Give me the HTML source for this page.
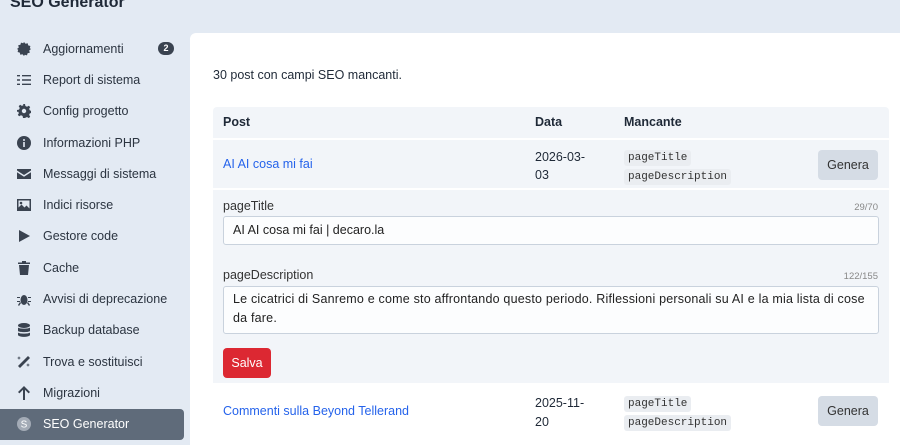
<!DOCTYPE html>
<html><head><meta charset="utf-8"><style>
*{box-sizing:border-box;margin:0;padding:0}
body{width:900px;height:445px;overflow:hidden;background:#e3eaf3;font-family:"Liberation Sans",sans-serif;font-size:13px;color:#1f2937;position:relative}
.title{position:absolute;left:10px;top:-6px;font-weight:bold;font-size:16px;color:#1f2937}
.nav{position:absolute;left:0;top:33px;width:184px}
.it{height:31.3px;display:flex;align-items:center;padding-left:17px;font-size:12.5px;color:#2b3440;position:relative}
.it svg{width:14px;height:14px;margin-right:12px;fill:#3a4350}
.it.act{background:#5f6b7a;color:#fff;border-radius:0 4px 4px 0}
.badge{position:absolute;left:158px;top:9px;width:16px;height:13px;border-radius:7px;background:#3a4350;color:#fff;font-size:9px;font-weight:bold;text-align:center;line-height:13px}
.main{position:absolute;left:190px;top:33px;width:720px;height:412px;background:#fff;border-radius:6px 0 0 0}
.abs{position:absolute}
a{color:#2563eb;text-decoration:none}
code{font-family:"Liberation Mono",monospace;font-size:11px;background:#eaedf1;padding:0 4px;border-radius:3px;color:#333;display:inline-block;line-height:16px}
.btn{position:absolute;border-radius:4px;font-size:12.5px;display:flex;align-items:center;justify-content:center}
.inp{position:absolute;left:223px;width:656px;background:#fcfdfe;border:1px solid #c9d2dd;border-radius:3px;padding:0 9px;font-size:12.5px;color:#222}
.lab{position:absolute;left:223px;font-size:12.5px;color:#333}
.cnt{position:absolute;right:22px;font-size:9.5px;color:#888}
</style></head><body>
<div class="title">SEO Generator</div>
<div class="nav">
<div class="it"><svg viewBox="0 0 14 14"><path d="M7 0l1.5 1.8 2.2-.6.5 2.2 2.2.6-.6 2.2L14 7l-1.8 1.5.6 2.2-2.2.5-.6 2.2-2.2-.6L7 14l-1.5-1.8-2.2.6-.5-2.2-2.2-.6.6-2.2L0 7l1.8-1.5-.6-2.2 2.2-.5.6-2.2 2.2.6z"/></svg>Aggiornamenti<span class="badge">2</span></div>
<div class="it"><svg viewBox="0 0 14 14"><path d="M5 2h9v1.4H5zM5 6.3h9v1.4H5zM5 10.6h9V12H5zM0 2h3v1.4H0zM0 6.3h3v1.4H0zM0 10.6h3V12H0z"/></svg>Report di sistema</div>
<div class="it"><svg viewBox="0 0 14 14"><path d="M6 0h2l.4 2 1.6.8 1.8-1.1 1.4 1.4-1.1 1.8.8 1.6 2 .4v2l-2 .4-.8 1.6 1.1 1.8-1.4 1.4-1.8-1.1-1.6.8L8 14H6l-.4-2-1.6-.8-1.8 1.1-1.4-1.4 1.1-1.8-.8-1.6L0 8V6l2-.4.8-1.6-1.1-1.8 1.4-1.4 1.8 1.1 1.6-.8zM7 4.8a2.2 2.2 0 100 4.4 2.2 2.2 0 000-4.4z"/></svg>Config progetto</div>
<div class="it"><svg viewBox="0 0 14 14"><circle cx="7" cy="7" r="7"/><rect x="6.2" y="6" width="1.6" height="5" fill="#e3eaf3"/><circle cx="7" cy="4" r="1" fill="#e3eaf3"/></svg>Informazioni PHP</div>
<div class="it"><svg viewBox="0 0 14 14"><path d="M0 2h14v1.5L7 8 0 3.5zM0 5.2l7 4.5 7-4.5V12H0z"/></svg>Messaggi di sistema</div>
<div class="it"><svg viewBox="0 0 14 14"><path d="M0 1h14v12H0zM1.5 2.5v7l3-3 3 3 2-2 3 3v-8z"/><circle cx="4" cy="5" r="1.3"/></svg>Indici risorse</div>
<div class="it"><svg viewBox="0 0 14 14"><path d="M2 1l11 6-11 6z"/></svg>Gestore code</div>
<div class="it"><svg viewBox="0 0 14 14"><path d="M1 1.5h12V3H1zM5 0h4v1.5H5zM2 4h10l-1 10H3z"/></svg>Cache</div>
<div class="it"><svg viewBox="0 0 14 14"><ellipse cx="7" cy="8" rx="3.5" ry="5"/><path d="M0 5h3v1H0zM11 5h3v1h-3zM0 9h3v1H0zM11 9h3v1h-3zM1 13l2-3 1 1-2 3zM13 13l-2-3-1 1 2 3z"/></svg>Avvisi di deprecazione</div>
<div class="it"><svg viewBox="0 0 14 14"><ellipse cx="7" cy="2.5" rx="6" ry="2.5"/><path d="M1 4.5c1 1.5 11 1.5 12 0V8c-1 1.5-11 1.5-12 0zM1 9.5c1 1.5 11 1.5 12 0V12c-1 2.5-11 2.5-12 0z"/></svg>Backup database</div>
<div class="it"><svg viewBox="0 0 14 14"><path d="M11 1l2 2L3 13l-2-2zM2 1l.5 1.5L4 3l-1.5.5L2 5l-.5-1.5L0 3l1.5-.5zM11 8l.5 1.5L13 10l-1.5.5L11 12l-.5-1.5L9 10l1.5-.5z"/></svg>Trova e sostituisci</div>
<div class="it"><svg viewBox="0 0 14 14"><path d="M7 0l6 6-1.4 1.4L8 3.8V14H6V3.8L2.4 7.4 1 6z"/></svg>Migrazioni</div>
<div class="it act"><svg viewBox="0 0 14 14"><circle cx="7" cy="7" r="7" fill="#a3abb6"/><text x="7" y="10.5" font-size="10" text-anchor="middle" fill="#fff" font-family="Liberation Sans">S</text></svg>SEO Generator</div>
</div>
<div class="main"></div>
<div class="abs" style="left:213px;top:68px;font-size:12.5px">30 post con campi SEO mancanti.</div>
<div class="abs" style="left:213px;top:107px;width:676px;height:31px;background:#f2f5f9;border-radius:4px 4px 0 0"></div>
<div class="abs" style="left:223px;top:115px;font-weight:bold;font-size:12.5px">Post</div>
<div class="abs" style="left:535px;top:115px;font-weight:bold;font-size:12.5px">Data</div>
<div class="abs" style="left:624px;top:115px;font-weight:bold;font-size:12.5px">Mancante</div>
<div class="abs" style="left:213px;top:140px;width:676px;height:48px;background:#f2f5f9"></div>
<div class="abs" style="left:223px;top:157px;font-size:12.5px"><a>AI AI cosa mi fai</a></div>
<div class="abs" style="left:535px;top:148px;font-size:12.5px;line-height:18px">2026-03-<br>03</div>
<div class="abs" style="left:624px;top:147px;line-height:18px"><code>pageTitle</code><br><code>pageDescription</code></div>
<div class="btn" style="left:818px;top:150px;width:60px;height:30px;background:#d5dce5;color:#333">Genera</div>
<div class="abs" style="left:213px;top:190px;width:676px;height:193px;background:#f2f5f9"></div>
<div class="lab" style="top:199px">pageTitle</div><div class="cnt" style="top:202px">29/70</div>
<div class="inp" style="top:216px;height:29px;line-height:27px">AI AI cosa mi fai | decaro.la</div>
<div class="lab" style="top:268px">pageDescription</div><div class="cnt" style="top:271px">122/155</div>
<div class="inp" style="top:286px;height:48px;line-height:19px;padding-top:3px;letter-spacing:0.2px">Le cicatrici di Sanremo e come sto affrontando questo periodo. Riflessioni personali su AI e la mia lista di cose da fare.</div>
<div class="btn" style="left:223px;top:348px;width:48px;height:30px;background:#dc2832;color:#fff">Salva</div>
<div class="abs" style="left:223px;top:404px;font-size:12.5px"><a>Commenti sulla Beyond Tellerand</a></div>
<div class="abs" style="left:535px;top:394px;font-size:12.5px;line-height:19px">2025-11-<br>20</div>
<div class="abs" style="left:624px;top:393px;line-height:18px"><code>pageTitle</code><br><code>pageDescription</code></div>
<div class="btn" style="left:818px;top:396px;width:60px;height:30px;background:#d5dce5;color:#333">Genera</div>
</body></html>
